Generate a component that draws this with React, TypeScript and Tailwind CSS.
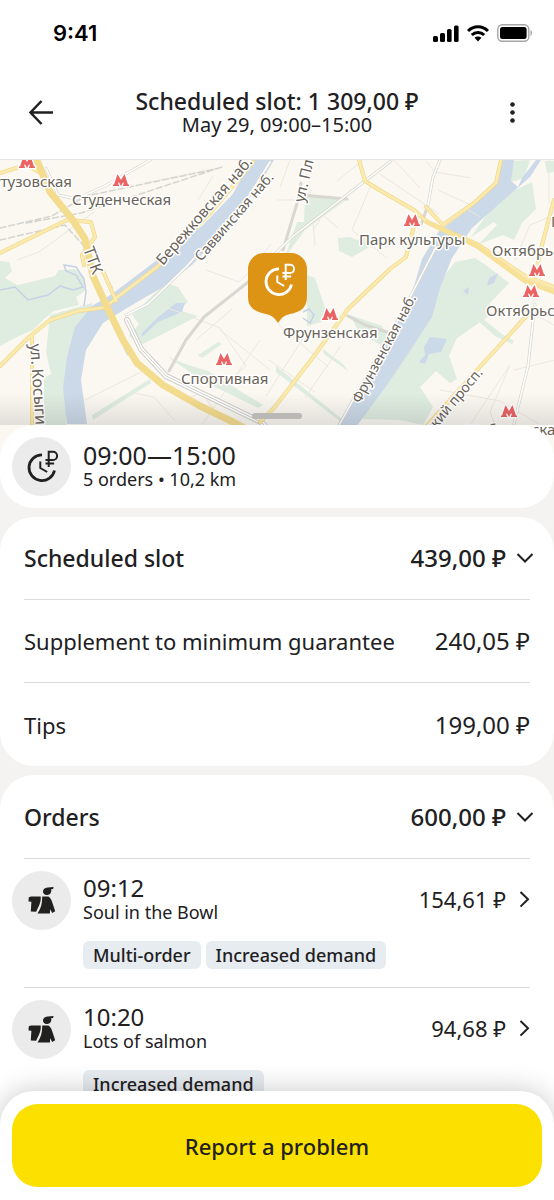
import React from "react";

function SlotIcon({ className }: { className?: string }) {
  return (
    <svg viewBox="0 0 34 34" className={className} fill="none" stroke="currentColor" aria-hidden="true">
      <path d="M17 4.800A12.900 12.900 0 1 0 29.500 20.500" strokeWidth="2.800" />
      <path d="M15.300 11.500v6.500l6.900 4" strokeWidth="2" />
      <path d="M23.700 17V1.800h4.300a4.100 4.100 0 0 1 0 8.200h-7.500M20.500 13.500h8.600" strokeWidth="2" />
    </svg>
  );
}

function CourierIcon() {
  return (
    <svg viewBox="0 0 30 30" className="size-[30px]" fill="currentColor" aria-hidden="true">
      <path d="M16.200 4.200C17 2.300 18.800 1.500 20.800 1.400l5.800-.5-.5 2-2 .4c.8 3.300-1 5.700-3.900 5.700-3 0-4.800-2.200-4-4.800z" />
      <path d="M1.800 11.200l2.300-.8h9.600c.3 2.500-.1 5.500-1.600 9l-3 6.300-5.300-.3.600-9.600-2.900-.4z" />
      <path d="M15.200 10.500h6.200c2.300 1.200 3.500 4.300 4.400 7.500l2.400 7.300-3 1.600-2-3.600-.3 4.100H10.500c3.200-4.500 4.900-9.800 4.700-16.900z" />
    </svg>
  );
}

function Chevron({ direction }: { direction: "down" | "right" }) {
  return (
    <svg viewBox="0 0 18 18" className="size-[18px]" fill="none" stroke="currentColor" strokeWidth="2" aria-hidden="true">
      <path d={direction === "down" ? "M1.500 5l7.500 7.500L16.500 5" : "M4.500 2l7.500 7.300-7.500 7.300"} />
    </svg>
  );
}

const metros = [
  [27, 162], [121, 180], [412, 220], [537, 270], [531, 291], [330, 314], [224, 359], [509, 411],
];

function RoadMap() {
  return (
    <svg
      viewBox="0 160 554 300"
      preserveAspectRatio="xMidYMid slice"
      className="block h-[300px] w-full bg-[#fbf8f2]"
      role="img"
      aria-label="Map of the delivery area"
    >
      <g fill="#dfece0">
        <path d="M0 261l9 1 3 9-7 7 12 7 14-3 24-6 4-6 16-1 9 8 2 13-10 7 3 8-25 6-9 7-12 12-14 6-19 10z" />
        <path d="M50 315l42-12 2 9-15 25-10 36-3 55H44v-50l7-4-5-22z" />
        <path d="M157 291l10-8 11 4 6 9 4 6-10 8 20 6-55 28-14-8 10-12-7-9zM198 355l20-13 4 2-20 14zM92 415l58-36 1 4-58 37zM168 357l20 8 20 6 55 34-5 3-55-27z" />
        <path d="M305 196l42 3-42 31-20 27 12-35 7 0zM307 275l8 3 10 30 4 12-22 6 0-25zM338 238l12-1 7 3 14-4-3 12-16 9-13-6z" />
        <path d="M532 182l-25 12-13 10-23 33 23-15 3 3-18 19 24-9 11 5 8-17 14-14zM455 262l20-4 12 8 22 17-19 20-1 13-32 22-8 18 8 23-7 4-14-12-16 16 13 20-10 18-24-5-38-1 34-50 28-43 11-37zM478 315l24 19 12 7-2 3-17-8-17-15zM507 161l23-1-6 18-13 4zM545 161h9v11l-7 1z" />
        <path d="M350 315l32 11 6 10-6 10-24-15zM323 349l20 15 5 7-24-17zM276 366l66 53-1 3-65-50z" />
      </g>
      <g fill="#ccd9e8">
        <path d="M252 160h22l-13 22-31 42-38 41-29 22-36 21-24 15-17 27-5 30 6 44H67l-4-36 4-31 8-30 17-21 20-12 45-34 45-34 30-31z" />
        <path d="M500 160h14l-3 21 7 6 4-9 14-18h5l-11 17-24 21-34 30-20 30-12 30-8 29-22 34-23 34-31 42h-20l20-31 35-65 21-38 10-34 17-28 34-25 24-25z" />
        <path d="M142 333l15-15 19-15 9 0-3 9-24 10-16 15zM424 347l6-10 17 2-6 13-12 2-4 10-6-2 6-7zM463 291l6-4-1 8zM489 278l9-5-4 10-7 3z" />
      </g>
      <g fill="none" stroke="#c5d1e6" strokeWidth="1.500">
        <path d="M0 290l15-3 13 13 20-5 12-9 13 4 10-3-7-12-10-4-2-6 12 2 8 12 2 13-2 14M303 312l6-3 5 6-4 8-7-5" />
      </g>
      <g fill="none" stroke="#ece8df" strokeWidth="1">
        <path d="M17 260l22-8 55-40M145 183l73-15M198 200l15-24M206 270l33 12 12-12 20-26M280 187l10-27M277 200h44M315 245l-6-64M337 181l26-21M338 228l-15-13-10 15M371 185l-19 45 35 28M380 174l59 40M394 160l26 28M426 161l9 11 36 6M438 190l33 15M465 208l15 9M549 160v44M515 260l15-35 24-10M503 344l36-52M524 308l30 17M555 360l-41 10M470 425l40-60-20 47 5 13M440 390l60 11 39 23M160 305l60 23 26 38-26 22M196 340l36-31M260 340l-58 85M220 330l50 40M278 324l50 43M269 360l46 32M307 332l-41 64M340 347l-35 51M134 393l20 4 21 24M185 400l16-8 15 20M85 400l60-30" />
      </g>
      <g fill="none" strokeLinecap="round" strokeLinejoin="round">
        <g stroke="#d8d8d1" strokeWidth="3">
          <path d="M46 168l12 27 18 4 29-13 45-26M275 254l17-17 99-76M283 250l15-50 3-17M302 195l45 4M440 160l-7 17-5 28-7 20M436 247l-32 62-66 118M535 304l-7 62-14 58M270 162l-23 37-59 66-40 39-22 11M169 371l17-31 18-23 48-38M116 328l12 26M348 316l17 9 25 8" />
        </g>
        <g stroke="#fff" strokeWidth="1.500">
          <path d="M46 168l12 27 18 4 29-13 45-26M275 254l17-17 99-76M440 160l-7 17-5 28M436 247l-32 62-66 118M535 304l-7 62-14 58M270 162l-23 37-59 66-40 39-22 11" />
        </g>
        <path stroke="#d4d5d0" strokeDasharray="6 3" strokeWidth="1.500" d="M0 228l52-12 34-20 130-27M26 223l55-10 44-14 97-32M0 240l65-15 18 20 29 42" />
        <path stroke="#cfcec7" strokeWidth="6" d="M127 320l14 29 25 27 95 46 12 12" />
        <path stroke="#fff" strokeWidth="4" d="M127 320l14 29 25 27 95 46 12 12" />
        <path stroke="#cfcec7" strokeWidth="1" d="M127 320l14 29 25 27 95 46 12 12" />
        <g stroke="#f0d27d" strokeWidth="4">
          <path d="M0 173l26-8 13 7M0 253l67-33 24 2 4 15-13 18 2 10M92 265l11 6 13 30M106 307l10-9 41-31 54-55 42-50M0 366l29-29 21-17 28-9 30-4M32 335v91" />
          <path d="M359 160l6 21 16 10 33 19 13 12 50 22 48 32 29 11M501 160l-5 23-22 20-31 22-17-18M414 226l-8 31-16 12-42 40-34 47-40 52-14 14M554 200l-12 45-7 31M534 308l-57 62-54 60" />
        </g>
        <g stroke="#faeaae" strokeWidth="3">
          <path d="M0 173l26-8 13 7M0 253l67-33 24 2 4 15-13 18 2 10M92 265l11 6 13 30M106 307l10-9 41-31 54-55 42-50M0 366l29-29 21-17 28-9 30-4M32 335v91" />
          <path d="M359 160l6 21 16 10 33 19 13 12 50 22 48 32 29 11M501 160l-5 23-22 20-31 22-17-18M414 226l-8 31-16 12-42 40-34 47-40 52-14 14M554 200l-12 45-7 31M534 308l-57 62-54 60" />
        </g>
        <path stroke="#f4dc8f" strokeWidth="7" d="M36 158l14 34 22 27 13 20 8 37 14 31 16 33 14 23 26 22 37 21 33 16 32 17" />
        <path stroke="#f7e198" strokeWidth="5" d="M427 222l50 24 48 35 29 11" />
      </g>
      {metros.map(([x, y]) => (
        <path
          key={`${x}-${y}`}
          transform={`translate(${x} ${y})`}
          d="M-8 6v-1.500h1L-3.500-6 0 0 3.500-6 7 4.500h1V6H2v-1.500h1L2.200 2 0 6-2.200 2-3 4.500h1V6z"
          fill="#ea6464"
          stroke="#fff"
          strokeWidth="3"
          paintOrder="stroke"
          strokeLinejoin="round"
        />
      ))}
      <g
        fill="#6a6358"
        stroke="#fff"
        strokeWidth="3"
        strokeLinejoin="round"
        paintOrder="stroke"
        className="font-['Noto_Sans',sans-serif] text-[15px]"
      >
        <text x="-7" y="187">утузовская</text>
        <text x="72" y="205">Студенческая</text>
        <text x="359" y="245">Парк культуры</text>
        <text x="492" y="256">Октябрьская</text>
        <text x="486" y="316">Октябрьская</text>
        <text x="283" y="338">Фрунзенская</text>
        <text x="181" y="384">Спортивная</text>
        <text x="464" y="435">Шаболовская</text>
        <text x="551" y="227">П</text>
        <text transform="translate(83 249) rotate(70)" className="text-[16px]">ТТК</text>
        <text transform="translate(163 266) rotate(-49)">Бережковская наб.</text>
        <text transform="translate(201 262) rotate(-49)" className="text-[14px]">Саввинская наб.</text>
        <text transform="translate(304 203) rotate(-77)">ул. Площиха</text>
        <text transform="translate(30 344) rotate(86)" className="text-[16px]">ул. Косыгина</text>
        <text transform="translate(360 404) rotate(-62)" className="text-[14px]">Фрунзенская наб.</text>
        <text transform="translate(432 434) rotate(-50)" className="text-[14px]">ский просп.</text>
      </g>
      <path d="M264 253h27a16 16 0 0 1 16 16v28c0 11-7 15-17 17-5 1-7 3-9 5l-3 4-3-4c-2-2-4-4-9-5-10-2-18-6-18-17v-28a16 16 0 0 1 16-16z" fill="#dd9415" />
      <g transform="translate(262 264)" fill="none" stroke="#fff">
        <path d="M17 4.800A12.900 12.900 0 1 0 29.500 20.500" strokeWidth="2.800" />
        <path d="M15.300 11.500v6.500l6.900 4" strokeWidth="2" />
        <path d="M23.700 16V0.800h4.300a4.100 4.100 0 0 1 0 8.200h-7.500M20.500 12.500h8.600" strokeWidth="2" />
      </g>
    </svg>
  );
}

function StatusBar() {
  return (
    <div className="flex h-[66px] items-center justify-between pr-[21px] pl-[53px] text-black">
      <span className="font-['Inter',sans-serif] text-[22px] leading-7 font-semibold">9:41</span>
      <div className="flex items-center gap-2">
        <svg viewBox="0 0 26 17" className="h-[17px] w-[26px]" fill="currentColor" aria-hidden="true">
          <rect x="0" y="11" width="5" height="6" rx="1.500" />
          <rect x="7" y="8" width="5" height="9" rx="1.500" />
          <rect x="14" y="4" width="4.600" height="13" rx="1.500" />
          <rect x="21" y="0.500" width="4.600" height="16.500" rx="1.500" />
        </svg>
        <svg viewBox="0 0 22 17" className="h-[17px] w-[22px]" fill="none" stroke="currentColor" strokeWidth="3" aria-hidden="true">
          <path d="M1 6C6.500.3 15.500.3 21 6" />
          <path d="M4.800 10c3.500-3.500 8.900-3.500 12.400 0" />
          <path d="M7.500 12.800c2-1.800 5-1.800 7 0L11 16.500z" fill="currentColor" stroke="none" />
        </svg>
        <svg viewBox="0 0 36 18" className="h-[18px] w-9" aria-hidden="true">
          <rect x="0.800" y="0.800" width="31" height="16.400" rx="4.500" fill="none" stroke="#a6a6a6" strokeWidth="1.400" />
          <rect x="3" y="3" width="26.600" height="12" rx="2.500" />
          <path d="M33.500 6v6c2-1 2-5 0-6z" fill="#a6a6a6" />
        </svg>
      </div>
    </div>
  );
}

function Row({ label, amount, strong }: { label: string; amount: string; strong?: boolean }) {
  return strong ? (
    <button type="button" className="flex h-[83px] w-full items-center justify-between text-left leading-7 font-medium">
      <span className="text-[23px]">{label}</span>
      <span className="-mr-1 flex items-center gap-2.5 text-[24px]">
        {amount}
        <Chevron direction="down" />
      </span>
    </button>
  ) : (
    <div className="flex h-[83px] items-center justify-between leading-7">
      <span className="text-[22px]">{label}</span>
      <span className="text-[24px]">{amount}</span>
    </div>
  );
}

type OrderProps = { time: string; place: string; amount: string; tags: string[] };

function Order({ time, place, amount, tags }: OrderProps) {
  return (
    <li className="group">
      <button type="button" className="flex w-full items-start gap-3 pr-5 pl-3 text-left">
        <span className="mt-3 flex size-[59px] shrink-0 items-center justify-center rounded-full bg-[#ebebeb]">
          <CourierIcon />
        </span>
        <span className="flex grow flex-col pt-[15px] pb-[18px]">
          <span className="flex items-center justify-between">
            <span className="flex flex-col">
              <span className="text-[24px] leading-7">{time}</span>
              <span className="text-[18px] leading-5">{place}</span>
            </span>
            <span className="flex items-center gap-2.5 pt-0.5 text-[22px] leading-7">
              {amount}
              <Chevron direction="right" />
            </span>
          </span>
          <span className="mt-[19px] flex gap-[5px]">
            {tags.map((tag) => (
              <span key={tag} className="rounded-md bg-[#e7ecf0] px-2.5 text-[18px] leading-7 font-medium whitespace-nowrap">
                {tag}
              </span>
            ))}
          </span>
        </span>
      </button>
      <div className="mx-6 h-px bg-[#dcdcdc] group-last:hidden" />
    </li>
  );
}

const orders: OrderProps[] = [
  { time: "09:12", place: "Soul in the Bowl", amount: "154,61 ₽", tags: ["Multi-order", "Increased demand"] },
  { time: "10:20", place: "Lots of salmon", amount: "94,68 ₽", tags: ["Increased demand"] },
];

export default function App() {
  return (
    <div className="flex h-screen flex-col overflow-hidden bg-white font-['Noto_Sans',sans-serif] text-[#21201f]">
      <header className="shrink-0 border-b border-[#e4e4e4]">
        <StatusBar />
        <div className="flex h-[93px] items-center justify-between px-6">
          <button type="button" aria-label="Back" className="flex size-9 items-center">
            <svg viewBox="0 0 36 36" className="size-9" fill="none" stroke="currentColor" strokeWidth="2.500" aria-hidden="true">
              <path d="M29 17.500H7M17.500 6L6.500 17.500l11 11.500" />
            </svg>
          </button>
          <div className="text-center">
            <h1 className="text-[23px] leading-6 font-medium">Scheduled slot: 1 309,00 ₽</h1>
            <p className="text-[20px] leading-6">May 29, 09:00–15:00</p>
          </div>
          <button type="button" aria-label="More options" className="flex size-9 items-center justify-center">
            <svg viewBox="0 0 36 36" className="size-9" fill="currentColor" aria-hidden="true">
              <circle cx="18.500" cy="9.500" r="2.300" />
              <circle cx="18.500" cy="17.500" r="2.300" />
              <circle cx="18.500" cy="25.500" r="2.300" />
            </svg>
          </button>
        </div>
      </header>

      <main className="-mb-8 min-h-0 grow overflow-y-auto bg-[#f4f3f1] [scrollbar-width:none]">
        <div className="relative">
          <RoadMap />
          <div className="absolute inset-x-0 bottom-[35px] h-8 bg-linear-to-b from-transparent to-black/10" />
          <div className="absolute bottom-[41px] left-1/2 h-1.5 w-[50px] -translate-x-1/2 rounded-full bg-[#bab8b5]" />
        </div>
        <div className="relative -mt-[35px] flex flex-col gap-[9px]">
          <section className="flex h-[83px] items-center gap-3 rounded-[34px] bg-white px-3">
            <span className="flex size-[59px] items-center justify-center rounded-full bg-[#ebebeb]">
              <SlotIcon className="size-[34px]" />
            </span>
            <div className="pb-1">
              <p className="text-[25px] leading-7">09:00—15:00</p>
              <p className="text-[18px] leading-5">5 orders • 10,2 km</p>
            </div>
          </section>

          <section className="divide-y divide-[#dcdcdc] rounded-[34px] bg-white px-6">
            <Row label="Scheduled slot" amount="439,00 ₽" strong />
            <Row label="Supplement to minimum guarantee" amount="240,05 ₽" />
            <Row label="Tips" amount="199,00 ₽" />
          </section>

          <section className="rounded-[34px] bg-white pb-10">
            <div className="px-6">
              <Row label="Orders" amount="600,00 ₽" strong />
              <div className="h-px bg-[#dcdcdc]" />
            </div>
            <ul>
              {orders.map((order) => (
                <Order key={order.time} {...order} />
              ))}
            </ul>
          </section>
        </div>
      </main>

      <footer className="relative shrink-0 rounded-t-[34px] bg-white px-3 pt-[13px] pb-[13px] shadow-[0_0_28px_rgba(0,0,0,0.22)]">
        <button type="button" className="h-[83px] w-full rounded-[26px] bg-[#fce000] text-[22px] leading-7 font-medium">
          Report a problem
        </button>
      </footer>
    </div>
  );
}
